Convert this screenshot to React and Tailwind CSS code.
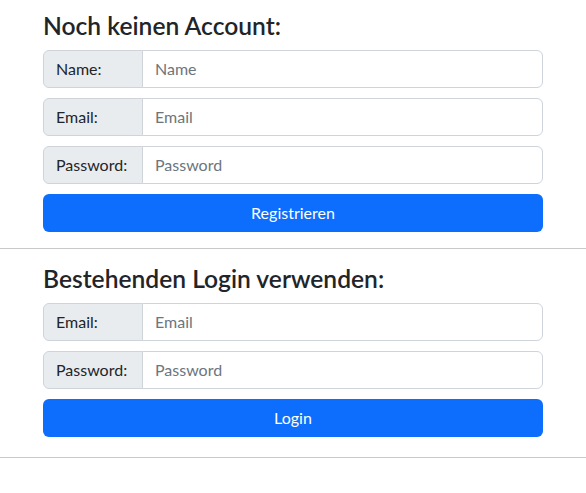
const font = { fontFamily: 'Lato, "Noto Sans", Arial, sans-serif' };

const Field = ({ label, placeholder, type = "text" }) => (
  <div className="flex h-[38px] w-full">
    <span className="flex w-[100px] shrink-0 items-center rounded-l-[6px] border border-[#ced4da] bg-[#e9ecef] px-3 text-[16px] text-[#212529]">
      {label}
    </span>
    <input
      type={type}
      placeholder={placeholder}
      className="-ml-px min-w-0 flex-1 rounded-r-[6px] border border-[#ced4da] bg-white px-3 text-[16px] text-[#212529] outline-none placeholder:text-[#6c757d]"
    />
  </div>
);

const SubmitButton = ({ children }) => (
  <button className="h-[38px] w-full rounded-[6px] bg-[#0d6efd] text-[16px] text-white">
    {children}
  </button>
);

export default function App() {
  return (
    <div className="min-h-[493px] w-full bg-white text-[#212529]" style={font}>
      {/* Registration */}
      <div className="mx-auto w-[500px] pt-[12px]">
        <h3 className="mb-[10px] text-[24.6px] font-semibold leading-[28px]">Noch keinen Account:</h3>
        <div className="flex flex-col gap-[10px]">
          <Field label="Name:" placeholder="Name" />
          <Field label="Email:" placeholder="Email" type="email" />
          <Field label="Password:" placeholder="Password" type="password" />
          <SubmitButton>Registrieren</SubmitButton>
        </div>
      </div>
      <hr className="mt-[16px] border-t border-[#c8c9ca]" />

      {/* Login */}
      <div className="mx-auto w-[500px] pt-[16px]">
        <h3 className="mb-[10px] text-[24.6px] font-semibold leading-[28px]">Bestehenden Login verwenden:</h3>
        <div className="flex flex-col gap-[10px]">
          <Field label="Email:" placeholder="Email" type="email" />
          <Field label="Password:" placeholder="Password" type="password" />
          <SubmitButton>Login</SubmitButton>
        </div>
      </div>
      <hr className="mt-[20px] border-t border-[#c8c9ca]" />
    </div>
  );
}
